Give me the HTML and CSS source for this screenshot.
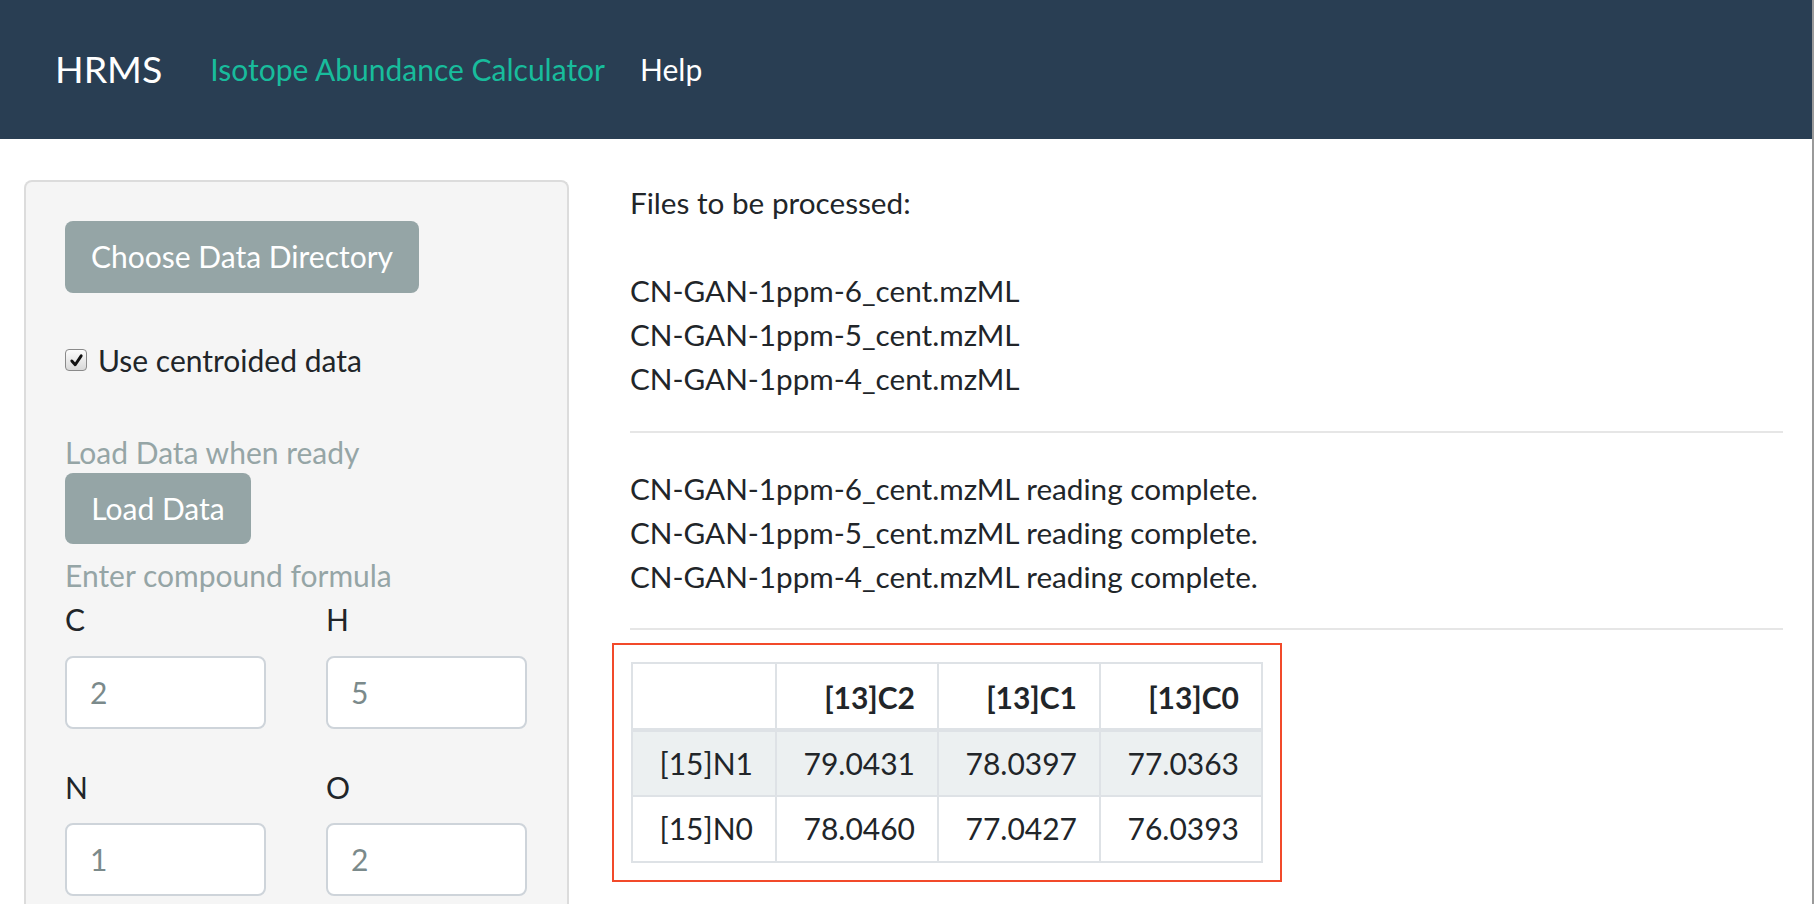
FILE: index.html
```html
<!DOCTYPE html>
<html lang="en">
<head>
<meta charset="utf-8">
<title>HRMS</title>
<link rel="stylesheet" href="styles.css">
</head>
<body>
<div class="page">
  <nav class="navbar">
    <span class="brand">HRMS</span>
    <a class="nav-link active">Isotope Abundance Calculator</a>
    <a class="nav-link">Help</a>
  </nav>
  <div class="content">
    <aside class="well">
      <button class="btn btn-choose">Choose Data Directory</button>
      <label class="check">
        <span class="check-box"><svg viewBox="0 0 20 20" width="20" height="20"><path d="M4.5 10.5 L8.5 15 L15.5 4.5" fill="none" stroke="#111" stroke-width="3.4" stroke-linecap="round" stroke-linejoin="round"/></svg></span>
        <span>Use centroided data</span>
      </label>
      <div class="muted load-label">Load Data when ready</div>
      <button class="btn btn-load">Load Data</button>
      <div class="muted formula-label">Enter compound formula</div>
      <div class="formula-grid">
        <div class="field">
          <div class="field-label">C</div>
          <div class="input">2</div>
        </div>
        <div class="field">
          <div class="field-label">H</div>
          <div class="input">5</div>
        </div>
        <div class="field">
          <div class="field-label">N</div>
          <div class="input">1</div>
        </div>
        <div class="field">
          <div class="field-label">O</div>
          <div class="input">2</div>
        </div>
      </div>
    </aside>
    <main class="main">
      <div class="block">
        <div class="line">Files to be processed:</div>
        <div class="line">&nbsp;</div>
        <div class="line">CN-GAN-1ppm-6_cent.mzML</div>
        <div class="line">CN-GAN-1ppm-5_cent.mzML</div>
        <div class="line">CN-GAN-1ppm-4_cent.mzML</div>
      </div>
      <hr class="rule rule-1">
      <div class="block">
        <div class="line">CN-GAN-1ppm-6_cent.mzML reading complete.</div>
        <div class="line">CN-GAN-1ppm-5_cent.mzML reading complete.</div>
        <div class="line">CN-GAN-1ppm-4_cent.mzML reading complete.</div>
      </div>
      <hr class="rule rule-2">
      <table class="results">
        <thead>
          <tr><th></th><th>[13]C2</th><th>[13]C1</th><th>[13]C0</th></tr>
        </thead>
        <tbody>
          <tr class="striped"><td>[15]N1</td><td>79.0431</td><td>78.0397</td><td>77.0363</td></tr>
          <tr><td>[15]N0</td><td>78.0460</td><td>77.0427</td><td>76.0393</td></tr>
        </tbody>
      </table>
    </main>
  </div>
</div>
</body>
</html>
```
FILE: styles.css
```css
* { box-sizing: border-box; }
html, body {
  margin: 0;
  padding: 0;
  height: 100%;
  overflow: hidden;
  background: #fff;
}
body {
  font-family: Lato, "Open Sans", "Liberation Sans", sans-serif;
  font-size: 30px;
  line-height: 1.45;
  color: #212529;
}
.page {
  height: 904px;
  border-right: 2px solid #9a9a9a;
}
.navbar {
  height: 139px;
  background: #293e53;
  display: flex;
  align-items: center;
  padding: 0 0 0 55px;
}
.brand {
  color: #fff;
  font-size: 37.5px;
  margin-right: 48px;
}
.nav-link {
  color: #fff;
  font-size: 30px;
  margin-right: 35px;
}
.nav-link.active { color: #18bc9c; }

.content {
  display: flex;
  align-items: flex-start;
  padding: 41px 0 0 24px;
}
.well {
  width: 545px;
  height: 760px;
  flex: none;
  background: #f5f5f5;
  border: 2px solid #dcdcdc;
  border-bottom: none;
  border-radius: 8px 8px 0 0;
  padding: 39px 39px 0 39px;
  display: flex;
  flex-direction: column;
  align-items: flex-start;
}
.btn {
  font-family: inherit;
  font-size: 30px;
  line-height: 43.5px;
  color: #fff;
  background: #95a5a6;
  border: none;
  border-radius: 8px;
  padding: 14px 0;
}
.btn-choose { width: 354px; height: 72px; }
.btn-load { width: 186px; height: 71px; }
.check {
  display: flex;
  align-items: center;
  gap: 11px;
  margin-top: 45px;
  line-height: 44px;
}
.check-box {
  width: 22px;
  height: 22px;
  border: 1px solid #8a8a8a;
  border-radius: 4px;
  background: linear-gradient(#fdfdfd, #d8d8d8);
  display: flex;
  align-items: center;
  justify-content: center;
}
.check-box svg { width: 17px; height: 17px; }
.muted { color: #95a5a6; line-height: 44px; }
.load-label { margin-top: 48px; }
.btn-load { margin-top: -1px; }
.formula-label { margin-top: 9px; }
.formula-grid {
  width: 100%;
  display: grid;
  grid-template-columns: 201px 201px;
  column-gap: 60px;
  row-gap: 37px;
  margin-top: 1px;
}
.field-label { line-height: 43.5px; }
.input {
  margin-top: 14px;
  height: 73px;
  background: #fff;
  border: 2px solid #ced4da;
  border-radius: 8px;
  color: #7b8a8b;
  padding: 0 23px;
  line-height: 69px;
}

.main {
  margin-left: 61px;
  width: 1153px;
  padding-top: 1px;
  font-size: 29.7px;
}
.line { line-height: 44px; }
.rule {
  border: none;
  border-top: 2px solid #e6e6e6;
  margin: 0;
}
.rule-1 { margin-top: 30px; margin-bottom: 34px; }
.rule-2 { margin-top: 29px; margin-bottom: 32px; }

.results {
  border-collapse: collapse;
  outline: 2px solid #f24a2a;
  outline-offset: 17px;
  margin-left: 1px;
  font-size: 30px;
}
.results th, .results td {
  border: 2px solid #dee2e6;
  padding: 10px 22px;
  text-align: right;
  line-height: 43.5px;
}
.results th {
  font-weight: 700;
  border-bottom-width: 4px;
  padding-top: 12px;
  padding-bottom: 8px;
}
.results th:first-child, .results td:first-child { width: 144px; }
.results th:not(:first-child), .results td:not(:first-child) { width: 162px; }
.results tr.striped td { background: #ecf0f1; }
```
